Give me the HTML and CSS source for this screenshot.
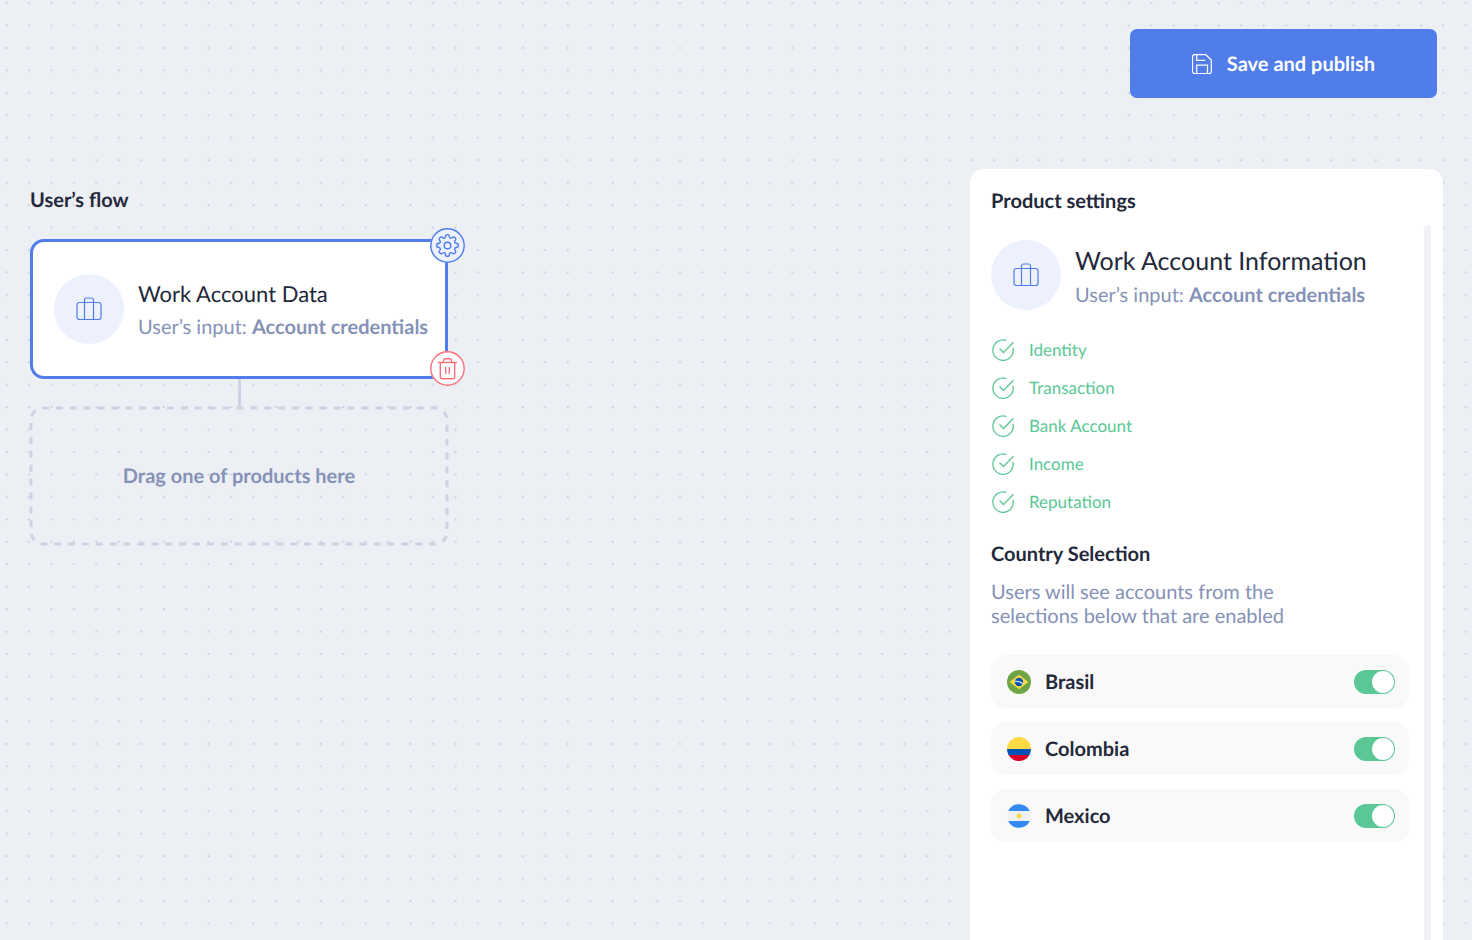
FILE: index.html
```html
<!DOCTYPE html>
<html lang="en">
<head>
  <meta charset="UTF-8" />
  <meta name="viewport" content="width=device-width, initial-scale=1.0" />
  <title>Flow builder</title>
  <link rel="stylesheet" href="styles.css">
</head>
<body>
  <!-- Shared icons -->
  <svg class="sprite" aria-hidden="true">
    <symbol id="icon-case" viewBox="0 0 26 26">
      <rect x="1" y="6.500" width="24" height="17" rx="2.500" />
      <path d="M8.500 23.500V4a2 2 0 0 1 2-2h5a2 2 0 0 1 2 2v19.500" />
    </symbol>
    <symbol id="icon-check" viewBox="0 0 24 24">
      <path d="M15.500 2.500A10.200 10.200 0 1 0 22 9.800" />
      <path d="M8.500 10.500l4 4L22.500 4.300" />
    </symbol>
  </svg>

  <div class="app">
    <header class="toolbar">
      <button class="btn-publish" type="button">
        <svg class="icon-save" viewBox="0 0 20 20" aria-hidden="true">
          <path d="M2.500 .7h11.300l5.500 5.300v11.500a2 2 0 0 1-2 2H2.500a2 2 0 0 1-2-2V2.700a2 2 0 0 1 2-2z" />
          <path d="M4.700 .7v5.600h8.600M4.700 19.500v-8.300h10.800v8.300" />
        </svg>
        Save and publish
      </button>
    </header>

    <main class="workspace">
      <section class="flow">
        <h2 class="section-title">User’s flow</h2>

        <div class="flow-node">
          <div class="node-card">
            <span class="avatar"><svg class="icon-case"><use href="#icon-case" /></svg></span>
            <div>
              <h3 class="node-title">Work Account Data</h3>
              <p class="node-input">User’s input: <strong>Account credentials</strong></p>
            </div>
          </div>
          <button class="node-action node-settings" type="button" aria-label="Settings">
            <svg viewBox="0 0 35 35" aria-hidden="true">
              <circle cx="17.500" cy="17.500" r="16.700" />
              <path transform="translate(5.700 5.700) scale(.98)" d="M9.900 3.200C10 1.700 10.800 .9 12 .9s2 .8 2.100 2.300c.1 1.300 1.500 1.900 2.600 1 1.200-1 2.300-.9 3.100-.1s.9 2-.1 3.100c-.9 1.100-.3 2.500 1.100 2.600 1.500.1 2.300 1 2.300 2.200s-.8 2-2.300 2.100c-1.400.1-2 1.500-1.100 2.600 1 1.200.9 2.300.1 3.100s-1.900.9-3.100-.1c-1.100-.9-2.500-.3-2.600 1.100-.1 1.500-.9 2.300-2.100 2.300s-2-.8-2.100-2.300c-.1-1.400-1.500-2-2.600-1.100-1.200 1-2.300.9-3.100.1s-.9-1.900.1-3.100c.9-1.100.3-2.500-1.100-2.600C1.700 14 .9 13.200.9 12s.8-2.100 2.300-2.200c1.400-.1 2-1.500 1.100-2.600-1-1.100-.9-2.300-.1-3.100s1.900-.9 3.100.1c1.100.9 2.500.3 2.600-1z" />
              <circle cx="17.500" cy="17.500" r="3.300" />
            </svg>
          </button>
          <button class="node-action node-delete" type="button" aria-label="Delete">
            <svg viewBox="0 0 35 35" aria-hidden="true">
              <circle cx="17.500" cy="17.500" r="16.700" />
              <path d="M8 11.500h19M10.300 11.500v14.300a2 2 0 0 0 2 2h10.400a2 2 0 0 0 2-2V11.500" />
              <path d="M13.500 11.500V9.700a2 2 0 0 1 2-2h4a2 2 0 0 1 2 2v1.800M15.700 16v7M19.300 16v7" />
            </svg>
          </button>
        </div>

        <div class="connector"></div>

        <div class="drop-zone">
          <svg class="drop-outline" aria-hidden="true"><rect width="100%" height="100%" rx="12" pathLength="1092" /></svg>
          Drag one of products here
        </div>
      </section>

      <aside class="panel">
        <div class="panel-body">
          <h2 class="section-title">Product settings</h2>

          <div class="product">
            <span class="avatar"><svg class="icon-case"><use href="#icon-case" /></svg></span>
            <div>
              <h3 class="product-title">Work Account Information</h3>
              <p class="node-input">User’s input: <strong>Account credentials</strong></p>
            </div>
          </div>

          <ul class="features">
            <li><svg class="icon-check"><use href="#icon-check" /></svg>Identity</li>
            <li><svg class="icon-check"><use href="#icon-check" /></svg>Transaction</li>
            <li><svg class="icon-check"><use href="#icon-check" /></svg>Bank Account</li>
            <li><svg class="icon-check"><use href="#icon-check" /></svg>Income</li>
            <li><svg class="icon-check"><use href="#icon-check" /></svg>Reputation</li>
          </ul>

          <h2 class="section-title">Country Selection</h2>
          <p class="hint">Users will see accounts from the selections below that are enabled</p>

          <div class="countries">
            <div class="country">
              <svg class="flag" viewBox="0 0 24 24" aria-hidden="true">
                <circle cx="12" cy="12" r="12" fill="#6da544" />
                <path d="M12 4.700L21.400 12 12 19.300 2.600 12z" fill="#ffda44" />
                <circle cx="12" cy="12" r="4.200" fill="#0052b4" />
                <path d="M8 10.800c3-.5 6 .5 8 2.500l-.6 1.200c-2-2-4.700-3-7.600-2.500z" fill="#f0f0f0" />
              </svg>
              <label for="brasil">Brasil</label>
              <input class="toggle" type="checkbox" id="brasil" checked>
            </div>
            <div class="country">
              <svg class="flag" viewBox="0 0 24 24" aria-hidden="true">
                <path d="M0 12a12 12 0 0 1 24 0z" fill="#ffda44" />
                <path d="M0 12a12 12 0 0 0 1.600 6h20.800a12 12 0 0 0 1.600-6z" fill="#0052b4" />
                <path d="M1.600 18a12 12 0 0 0 20.800 0z" fill="#d80027" />
              </svg>
              <label for="colombia">Colombia</label>
              <input class="toggle" type="checkbox" id="colombia" checked>
            </div>
            <div class="country">
              <svg class="flag" viewBox="0 0 24 24" aria-hidden="true">
                <circle cx="12" cy="12" r="12" fill="#f0f0f0" />
                <path d="M1.200 7a12 12 0 0 1 21.600 0zM1.200 17a12 12 0 0 0 21.600 0z" fill="#338af3" />
                <path d="M12 8.800l.8 1.400 1.500-.5-.5 1.500 1.400.8-1.400.8.5 1.500-1.500-.5-.8 1.400-.8-1.400-1.500.5.5-1.500-1.400-.8 1.400-.8-.5-1.500 1.500.5z" fill="#ffda44" />
              </svg>
              <label for="mexico">Mexico</label>
              <input class="toggle" type="checkbox" id="mexico" checked>
            </div>
          </div>
        </div>
        <div class="scroll-track"></div>
      </aside>
    </main>
  </div>
</body>
</html>
```
FILE: styles.css
```css
* {
  box-sizing: border-box;
}

body {
  margin: 0;
  color: #23283a;
  font-family: Lato, 'Liberation Sans', sans-serif;
  font-size: 20px;
  line-height: 24px;
  text-rendering: geometricPrecision;
  background-color: #eceff4;
  background-image: url("data:image/svg+xml,%3Csvg xmlns='http://www.w3.org/2000/svg' viewBox='0 0 400 400'%3E%3Cpattern id='d' width='20' height='20' patternUnits='userSpaceOnUse'%3E%3Ccircle cx='5.800' cy='2.800' r='1' fill='%23c9cfe0'/%3E%3C/pattern%3E%3Crect width='400' height='400' fill='url(%23d)'/%3E%3C/svg%3E");
  background-size: 449px 449px;
}

h2, h3, p, ul {
  margin: 0;
  padding: 0;
}

button {
  padding: 0;
  font: inherit;
  text-rendering: inherit;
  cursor: pointer;
}

.sprite {
  position: absolute;
  width: 0;
  height: 0;
}

.app {
  display: flex;
  flex-direction: column;
  height: 100vh;
  overflow: hidden;
}

/* Top bar */
.toolbar {
  display: flex;
  justify-content: flex-end;
  padding: 29px 35px 0 30px;
}

.btn-publish {
  display: flex;
  align-items: center;
  justify-content: center;
  gap: 15px;
  width: 307px;
  height: 69px;
  border: 0;
  border-radius: 7px;
  background: #507dea;
  color: #fff;
  font-weight: bold;
}

.icon-save {
  width: 20px;
  height: 20px;
  fill: none;
  stroke: #fff;
  stroke-width: 1.2;
}

.workspace {
  display: flex;
  flex: 1;
  justify-content: space-between;
  gap: 30px;
  padding: 71px 29px 0 30px;
}

.section-title {
  font-size: 20px;
  line-height: 24px;
}

/* User's flow */
.flow {
  width: 418px;
  padding-top: 19px;
}

.flow-node {
  position: relative;
  margin-top: 27px;
}

.node-card {
  display: flex;
  align-items: center;
  gap: 14px;
  height: 140px;
  padding: 0 21px;
  border: 3px solid #507dea;
  border-radius: 14px;
  background: #fff;
}

.avatar {
  display: flex;
  flex-shrink: 0;
  align-items: center;
  justify-content: center;
  width: 70px;
  height: 70px;
  border-radius: 50%;
  background: #ecf1fd;
}

.icon-case {
  width: 26px;
  height: 26px;
  fill: none;
  stroke: #507dea;
  stroke-width: 1.2;
}

.node-title {
  padding-top: 4px;
  font-size: 22px;
  font-weight: normal;
  line-height: 32px;
}

.node-input {
  color: #8592b8;
  line-height: 34px;
  white-space: nowrap;
}

.node-action {
  position: absolute;
  right: -17px;
  width: 35px;
  height: 35px;
  border: 0;
  border-radius: 50%;
}

.node-action svg {
  display: block;
  width: 35px;
  height: 35px;
  fill: none;
  stroke: currentColor;
  stroke-width: 1.4;
}

.node-settings {
  top: -11px;
  background: #ecf1fd;
  color: #507dea;
}

.node-delete {
  bottom: -7px;
  background: #fff;
  color: #fb6f7c;
}

.connector {
  width: 3px;
  height: 28px;
  margin: 0 auto;
  background: #ccd3e5;
}

.drop-zone {
  position: relative;
  display: flex;
  align-items: center;
  justify-content: center;
  height: 138px;
  color: #8592b8;
  font-weight: bold;
}

.drop-outline {
  position: absolute;
  top: 1px;
  left: 1px;
  width: calc(100% - 2px);
  height: calc(100% - 2px);
  overflow: visible;
  fill: none;
  stroke: #ccd3e5;
  stroke-width: 3;
  stroke-dasharray: 7 7;
  stroke-dashoffset: 1;
}

/* Product settings */
.panel {
  display: flex;
  justify-content: space-between;
  width: 473px;
  padding: 20px 12px 0 21px;
  border-radius: 14px 14px 0 0;
  background: #fff;
}

.panel-body {
  width: 418px;
}

.scroll-track {
  width: 7px;
  margin-top: 36px;
  border-radius: 4px 4px 0 0;
  background: #f0f2f7;
}

.product {
  display: flex;
  align-items: center;
  gap: 14px;
  height: 70px;
  margin-top: 27px;
}

.product-title {
  padding-top: 5px;
  font-size: 25px;
  font-weight: normal;
  line-height: 34px;
  white-space: nowrap;
}

.features {
  margin: 21px 0;
  list-style: none;
  color: #5ac795;
  font-size: 17px;
  line-height: 38px;
}

.features li {
  display: flex;
  align-items: center;
  gap: 14px;
}

.icon-check {
  width: 24px;
  height: 24px;
  fill: none;
  stroke: currentColor;
  stroke-width: 1.3;
}

.hint {
  max-width: 300px;
  margin-top: 14px;
  color: #8592b8;
}

.countries {
  display: flex;
  flex-direction: column;
  gap: 14px;
  margin-top: 27px;
}

.country {
  display: flex;
  align-items: center;
  gap: 14px;
  height: 53px;
  padding: 0 14px 0 16px;
  border-radius: 14px;
  background: #f9f9f9;
  font-weight: bold;
}

.country label {
  flex: 1;
}

.flag {
  width: 24px;
  height: 24px;
}

.toggle {
  display: flex;
  align-items: center;
  width: 41px;
  height: 24px;
  margin: 0;
  padding: 0 1px;
  border-radius: 12px;
  background: #c5cbd9;
  appearance: none;
}

.toggle::before {
  content: '';
  width: 22px;
  height: 22px;
  border-radius: 50%;
  background: #fff;
}

.toggle:checked {
  justify-content: flex-end;
  background: #5ac795;
}
```
